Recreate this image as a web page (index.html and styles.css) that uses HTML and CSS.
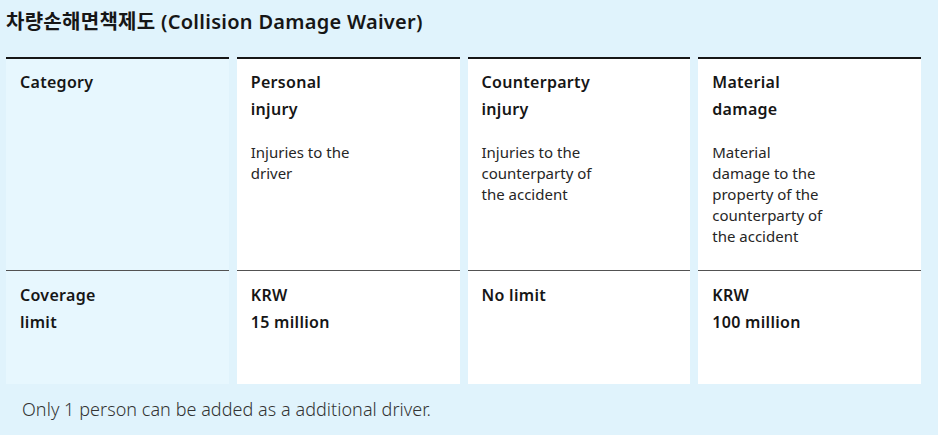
FILE: index.html
```html
<!DOCTYPE html>
<html lang="ko">
<head>
<meta charset="utf-8">
<title>차량손해면책제도</title>
<link rel="stylesheet" href="styles.css">
</head>
<body>
<section class="cdw">
  <h2 class="cdw-title">차량손해면책제도 (Collision Damage Waiver)</h2>
  <div class="cdw-table">
    <div class="cell first row1"><p class="label">Category</p></div>
    <div class="cell row1"><p class="label">Personal<br>injury</p><p class="desc">Injuries to the<br>driver</p></div>
    <div class="cell row1"><p class="label">Counterparty<br>injury</p><p class="desc">Injuries to the<br>counterparty of<br>the accident</p></div>
    <div class="cell row1"><p class="label">Material<br>damage</p><p class="desc">Material<br>damage to the<br>property of the<br>counterparty of<br>the accident</p></div>

    <div class="cell first row2"><p class="label">Coverage<br>limit</p></div>
    <div class="cell row2"><p class="label">KRW<br>15 million</p></div>
    <div class="cell row2"><p class="label">No limit</p></div>
    <div class="cell row2"><p class="label">KRW<br>100 million</p></div>
  </div>
  <p class="cdw-note">Only 1 person can be added as a additional driver.</p>
</section>
</body>
</html>
```
FILE: styles.css
```css
html, body {
  margin: 0;
  padding: 0;
  background: #e0f3fc;
}
body {
  font-family: "Noto Sans", "Noto Sans CJK KR", sans-serif;
  color: #161616;
}
.cdw {
  padding: 8px 0 0 6px;
}
.cdw-title {
  margin: 0;
  font-size: 20px;
  line-height: 28px;
  font-weight: 600;
  letter-spacing: 0.28px;
  font-family: "Noto Sans", "Noto Sans CJK KR", sans-serif;
}
.cdw-table {
  margin-top: 21px;
  width: 915px;
  display: grid;
  grid-template-columns: repeat(4, 1fr);
  column-gap: 8px;
}
.cell {
  background: #ffffff;
  padding: 10px 14px 0;
}
.cell.first {
  background: #e7f7fe;
}
.row1 {
  border-top: 2px solid #161616;
  padding-bottom: 23px;
}
.row2 {
  border-top: 1px solid #525252;
  padding-top: 11px;
  box-sizing: border-box;
  height: 114px;
}
.label {
  margin: 0;
  font-size: 16px;
  line-height: 27px;
  font-weight: 600;
  letter-spacing: 0.3px;
}
.desc {
  margin: 19px 0 0;
  font-size: 15px;
  line-height: 21px;
  font-weight: 400;
  color: #262626;
}
.cdw-note {
  margin: 13px 0 0 16px;
  font-size: 18px;
  line-height: 24px;
  font-weight: 300;
  letter-spacing: 0.05px;
  color: #333333;
}
```
